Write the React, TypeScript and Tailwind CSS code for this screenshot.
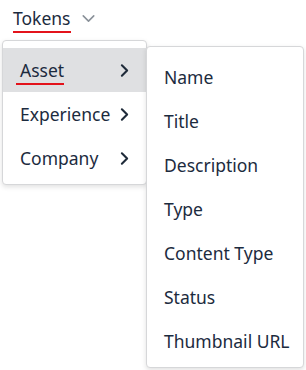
import { ChevronDown, ChevronRight } from "lucide-react";

const groups = [
  { label: "Asset", active: true },
  { label: "Experience", active: false },
  { label: "Company", active: false },
];

const fields = ["Name", "Title", "Description", "Type", "Content Type", "Status", "Thumbnail URL"];

export default function App() {
  return (
    <div
      className="w-[306px] h-[370px] bg-white text-[#1c2b3e] overflow-hidden"
      style={{ fontFamily: '"Noto Sans", "Open Sans", sans-serif' }}
    >
      {/* Trigger */}
      <div className="flex items-center gap-[7px] pl-[13px] pt-[6px]">
        <span className="relative text-[17.5px] leading-[24px]">
          Tokens
          <span className="absolute left-0 right-0 -bottom-[3px] h-[2px] bg-[#e3131b]" />
        </span>
        <ChevronDown className="w-[21px] h-[21px] text-[#8a9199]" strokeWidth={1.8} />
      </div>

      {/* Menus */}
      <div className="flex items-start pl-[2px] mt-[10px]">
        <div className="w-[145px] pt-[7px] pb-[4px] bg-white border border-[#d6d7d9] rounded-[4px] shadow-[0_2px_5px_rgba(0,0,0,0.12)]">
          {groups.map((g) => (
            <div
              key={g.label}
              className={
                g.active
                  ? "flex items-center justify-between h-[44px] pl-[17px] pr-[11px] bg-[#dfe0e2]"
                  : "flex items-center justify-between h-[44px] pl-[17px] pr-[11px]"
              }
            >
              <span className="relative text-[17.5px] leading-[24px]">
                {g.label}
                {g.active && (
                  <span className="absolute -left-[4px] right-0 -bottom-[3px] h-[2px] bg-[#e3131b]" />
                )}
              </span>
              <ChevronRight className="w-[21px] h-[21px] text-[#1f2b3a]" strokeWidth={2.4} />
            </div>
          ))}
        </div>
        <div className="relative z-10 -ml-[1px] mt-[6px] w-[158px] pt-[8px] pb-[4px] bg-white border border-[#d6d7d9] rounded-[4px] shadow-[0_2px_5px_rgba(0,0,0,0.12)]">
          {fields.map((f) => (
            <div key={f} className="flex items-center h-[44px] pl-[17px] text-[17.5px] leading-[24px]">
              {f}
            </div>
          ))}
        </div>
      </div>
    </div>
  );
}
